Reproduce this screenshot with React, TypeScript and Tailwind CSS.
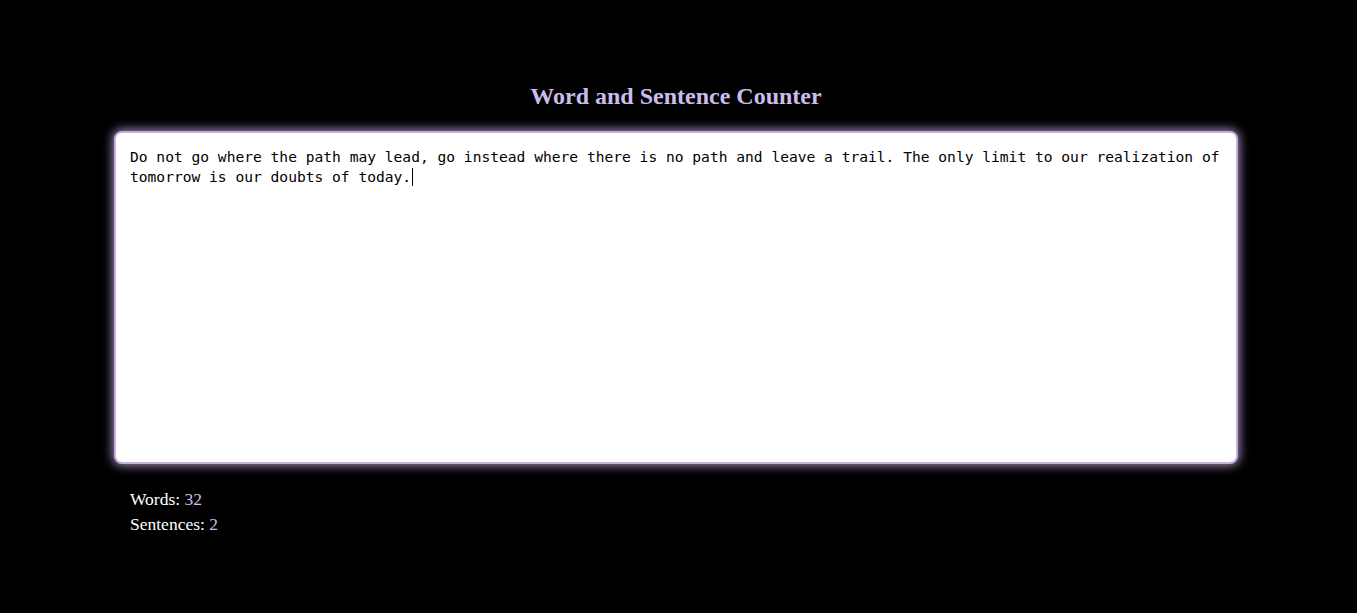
import React from "react";

const TEXT =
  "Do not go where the path may lead, go instead where there is no path and leave a trail. The only limit to our realization of tomorrow is our doubts of today.";

export default function App() {
  const words = TEXT.trim().split(/\s+/).length;
  const sentences = TEXT.split(/[.!?]+/).filter((s) => s.trim().length > 0).length;
  return (
    <div className="min-h-[613px] w-full bg-black" style={{ fontFamily: '"Liberation Serif", "Times New Roman", serif' }}>
      <div className="ml-[114px] w-[1124px] pt-[82px]">
        <h1 className="text-center text-[24px] font-bold leading-[28px] text-[#cbbcec]">
          Word and Sentence Counter
        </h1>
        <div className="mt-[21px] h-[333px] rounded-[8px] border-2 border-[#c7afe0] bg-white px-[14px] pt-[14px] pb-[14px] shadow-[0_0_10px_2px_rgba(200,170,230,0.75)]">
          <p
            className="text-[14.6px] leading-[20px] text-black"
            style={{ fontFamily: '"DejaVu Sans Mono", "Liberation Mono", monospace' }}
          >
            {TEXT}
            <span className="ml-[1px] inline-block h-[18px] w-[1px] bg-black align-[-4px]" />
          </p>
        </div>
        <div className="mt-[23px] px-[16px] text-[17.5px] leading-[25px] text-white">
          <div>
            Words: <span className="text-[#cbbcec]">{words}</span>
          </div>
          <div>
            Sentences: <span className="text-[#cbbcec]">{sentences}</span>
          </div>
        </div>
      </div>
    </div>
  );
}
